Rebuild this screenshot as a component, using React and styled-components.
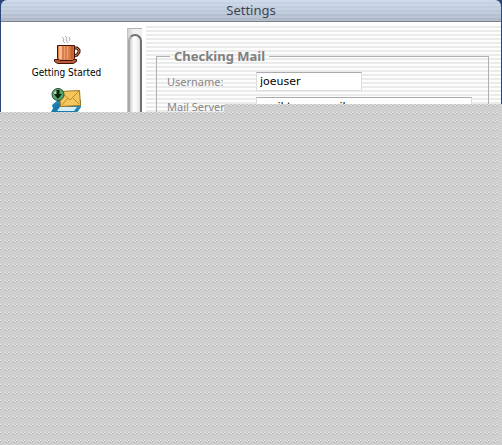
import { useState } from "react";
import styled, { createGlobalStyle } from "styled-components";

const GlobalStyle = createGlobalStyle`
  * {
    box-sizing: border-box;
  }

  body {
    margin: 0;
    background: #2c4678;
    font-family: "Noto Sans", "Open Sans", sans-serif;
  }
`;

const Window = styled.div`
  position: relative;
  display: grid;
  grid-template-rows: auto 1fr;
  min-height: 100vh;
  margin-left: 1px;
  margin-right: 1px;
  border-radius: 6px 6px 0 0;
`;

const TitleBar = styled.header`
  height: 22px;
  border-bottom: 1px solid #7c8088;
  border-radius: 6px 6px 0 0;
  background:
    repeating-linear-gradient(
      rgba(255, 255, 255, 0.14) 0 2px,
      transparent 2px 4px
    ),
    linear-gradient(#c8d6e8, #b9c6d8 60%, #aab4c3);
`;

const Title = styled.h1`
  margin: 0;
  font-size: 13px;
  font-weight: 400;
  line-height: 20px;
  text-align: center;
  color: #3d4552;
`;

const Content = styled.div`
  display: grid;
  grid-template-columns: 126px 19px 1fr;
  border-top: 2px solid #fff;
  background: repeating-linear-gradient(#fdfdfd 0 2px, #ebebeb 2px 4px);
`;

const Sidebar = styled.nav`
  display: flex;
  flex-direction: column;
  align-items: center;
  gap: 8px;
  padding-top: 12px;
  padding-left: 5px;
  background: #fff;
`;

const SidebarItem = styled.button`
  display: flex;
  flex-direction: column;
  align-items: center;
  padding: 0;
  border: none;
  background: none;
  color: #000;
  font-family: "DejaVu Sans Condensed", "DejaVu Sans", sans-serif;
  font-size: 10px;
  line-height: 14px;
  cursor: pointer;
`;

const ScrollBar = styled.div`
  padding: 4px 4px 0 0;
  background: #fff;
`;

const Track = styled.div`
  height: 100%;
  padding-top: 5px;
  border-left: 1px solid #c4c4c4;
  border-top: 1px solid #b4b4b4;
  background: linear-gradient(90deg, #d4d4d4, #f2f2f2 40%, #eee);
`;

const Thumb = styled.div`
  height: 100%;
  border: 2px solid #707070;
  border-bottom: none;
  border-left-color: #a8a8a8;
  border-radius: 7px 7px 0 0;
  background: linear-gradient(90deg, #d0d0d0, #fff 40%, #f0f0f0 80%, #ddd);
`;

const Panel = styled.form`
  padding: 23px 12px 0 10px;
`;

const Group = styled.fieldset`
  min-width: 0;
  min-height: 300px;
  margin: 0;
  padding: 7px 16px 0 10px;
  border: 1px solid #b0b0b0;
`;

const Legend = styled.legend`
  margin-left: 3px;
  padding: 0 4px;
  color: #808080;
  font-size: 13px;
  font-weight: 700;
  line-height: 18px;
`;

const Fields = styled.div`
  display: flex;
  flex-direction: column;
  gap: 6px;
`;

const Field = styled.div`
  display: grid;
  grid-template-columns: 89px 1fr;
  align-items: center;
`;

const Label = styled.label`
  color: #868686;
  font-size: 11px;
  line-height: 18px;
`;

const TextInput = styled.input`
  width: ${(props) => (props.$short ? "106px" : "100%")};
  height: 19px;
  padding: 0 3px;
  border: 1px solid #dcdcdc;
  border-top-color: #aaa;
  border-radius: 0;
  outline: none;
  background: #fff;
  color: #000;
  font-family: "DejaVu Sans", sans-serif;
  font-size: 11px;
`;

const speckle = encodeURIComponent(
  `<svg xmlns="http://www.w3.org/2000/svg" width="8" height="8" shape-rendering="crispEdges">
    <path fill="#d5d5d5" d="M3 1h1v1h-1zM5 1h1v1h-1zM2 4h1v1h-1zM4 4h1v1h-1zM6 4h1v1h-1zM1 6h1v1h-1zM5 6h1v1h-1z"/>
    <path fill="#cacaca" d="M3 3h1v1h-1zM5 3h1v1h-1zM1 4h1v1h-1zM4 6h1v1h-1zM6 6h1v1h-1z"/>
    <path fill="#f0f0f0" d="M0 0h1v1h-1zM7 1h1v1h-1zM6 0h1v1h-1z"/>
    <path fill="#aaa" d="M7 0h1v1h-1zM0 1h1v1h-1zM6 2h1v1h-1z"/>
  </svg>`
);

// covers the part of the window that has not been drawn yet
const Undrawn = styled.div`
  position: absolute;
  top: ${(props) => props.$top};
  right: -1px;
  bottom: 0;
  left: ${(props) => props.$left};
  background: #cfcfcf url("data:image/svg+xml,${speckle}");
`;

const CupIcon = () => (
  <svg width="30" height="30" viewBox="0 0 30 30" aria-hidden="true">
    <path
      d="M10 1l2 2-1 2 2 2M13 0l2 2-1 2 2 3M17 1l1 2-1 2"
      fill="none"
      stroke="#aaa"
    />
    <path
      d="M22 12h3l2 2v2l-2 3-3 1"
      fill="none"
      stroke="#421307"
      strokeWidth="3"
    />
    <path d="M22 12h3l2 2v2l-2 3-3 1" fill="none" stroke="#e18a5c" />
    <path d="M2.5 23.5h22v2l-3 2h-16l-3-2z" fill="#bd5a35" stroke="#421307" />
    <path d="M5.5 9.5h17v13l-2 2h-13l-2-2z" fill="#dd7d4c" stroke="#421307" />
    <path d="M8.5 10v13" stroke="#f6bd90" strokeWidth="3" />
    <path d="M12.500 10v13M15.500 10v13" stroke="#eda070" />
    <path d="M20 10v13" stroke="#c0602f" strokeWidth="3" />
  </svg>
);

const MailIcon = () => (
  <svg width="32" height="32" viewBox="0 0 32 32" aria-hidden="true">
    <path d="M1 17l6-5h23v7l-6 9H4z" fill="#2385b5" />
    <path d="M0 24l4-7 7-2-4 6h17l-4 7H4z" fill="#1879ad" />
    <path d="M9 19h17l-3 4H6z" fill="#d5edf5" />
    <path d="M8.500 3.500l20-1 1 15-20 1z" fill="#f4c75a" stroke="#a27422" />
    <path
      d="M10 4l9 8 9-9M11 17l6-7M28 16l-6-6"
      fill="none"
      stroke="#bd8b35"
    />
    <circle cx="7" cy="6.5" r="6" fill="#58a66b" stroke="#2a4a37" />
    <circle cx="5" cy="5" r="2" fill="#b4dcb9" />
    <path d="M7 2v5" stroke="#082512" strokeWidth="3" />
    <path d="M3 6h8l-4 5z" fill="#082512" />
  </svg>
);

const App = () => {
  const [account, setAccount] = useState({
    username: "joeuser",
    server: "mail.toursemail.com",
  });

  const handleChange = (e) => {
    setAccount({ ...account, [e.target.name]: e.target.value });
  };

  return (
    <>
      <GlobalStyle />
      <Window>
        <TitleBar>
          <Title>Settings</Title>
        </TitleBar>
        <Content>
          <Sidebar>
            <SidebarItem type="button">
              <CupIcon />
              Getting Started
            </SidebarItem>
            <SidebarItem type="button" aria-label="Mail">
              <MailIcon />
            </SidebarItem>
          </Sidebar>
          <ScrollBar>
            <Track>
              <Thumb />
            </Track>
          </ScrollBar>
          <Panel>
            <Group>
              <Legend>Checking Mail</Legend>
              <Fields>
                <Field>
                  <Label htmlFor="username">Username:</Label>
                  <TextInput
                    id="username"
                    name="username"
                    $short
                    value={account.username}
                    onChange={handleChange}
                  />
                </Field>
                <Field>
                  <Label htmlFor="server">Mail Server:</Label>
                  <TextInput
                    id="server"
                    name="server"
                    value={account.server}
                    onChange={handleChange}
                  />
                </Field>
              </Fields>
            </Group>
          </Panel>
        </Content>
        <Undrawn $top="112px" $left="-1px" />
        <Undrawn $top="104px" $left="223px" />
      </Window>
    </>
  );
};

export default App;
